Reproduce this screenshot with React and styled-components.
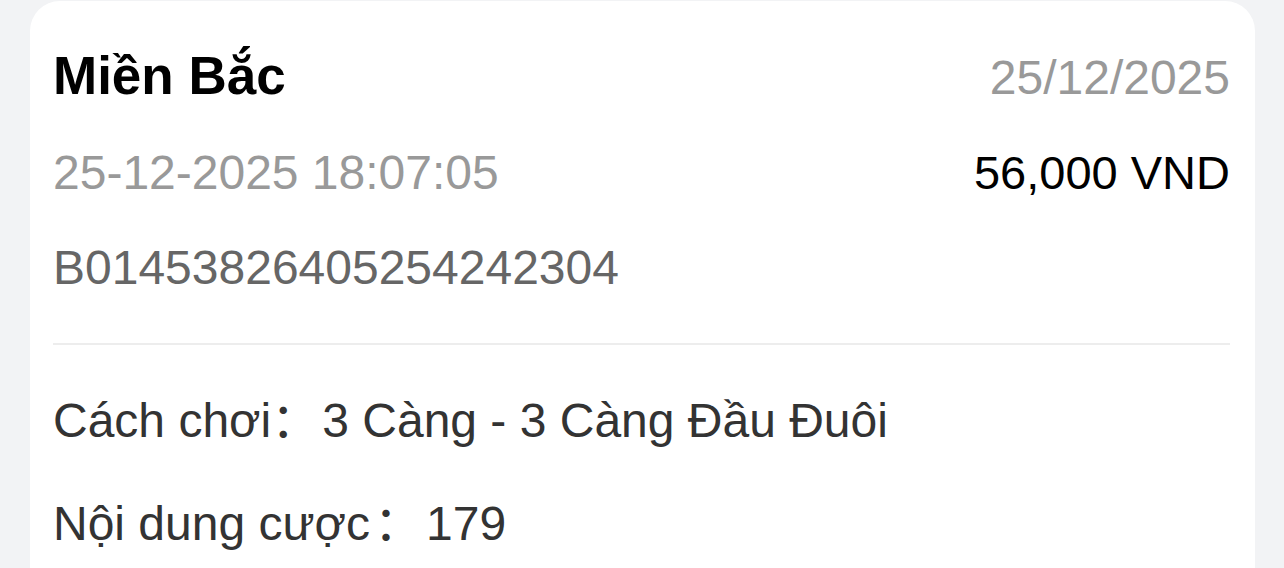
import React from "react";
import styled, { createGlobalStyle } from "styled-components";

const Global = createGlobalStyle`
  html, body { margin: 0; padding: 0; background: #f2f3f5; }
  body { font-family: "Liberation Sans", Arial, "Noto Sans CJK SC", sans-serif; }
`;

const Page = styled.div`
  padding: 1px 29px 0 30px;
  height: 568px;
  box-sizing: border-box;
  overflow: hidden;
`;

const Card = styled.div`
  background: #ffffff;
  border-radius: 30px;
  padding: 51px 25px 60px 23px;
  min-height: 700px;
  box-sizing: border-box;
`;

const Row = styled.div`
  display: flex;
  justify-content: space-between;
  align-items: baseline;
  margin-top: ${(p) => p.$gap || 0}px;
`;

const Title = styled.div`
  font-size: 53px;
  line-height: 48px;
  font-weight: 700;
  color: #000;
`;

const Text = styled.div`
  font-size: ${(p) => p.$size || 48}px;
  line-height: 48px;
  color: ${(p) => p.$color || "#333"};
`;

const Divider = styled.div`
  height: 2px;
  background: #ededed;
  margin-top: 51px;
`;

const Field = styled.div`
  font-size: 48px;
  line-height: 48px;
  color: #333;
  white-space: nowrap;
  margin-top: ${(p) => p.$gap}px;
`;

const Colon = styled.span`
  font-family: "Noto Sans CJK SC", sans-serif;
  line-height: 0;
  margin-left: ${(p) => p.$pre || 0}px;
  margin-right: ${(p) => p.$post || 4}px;
`;

export default function App() {
  return (
    <>
      <Global />
      <Page>
        <Card>
          <Row>
            <Title>Miền Bắc</Title>
            <Text $color="#999">25/12/2025</Text>
          </Row>
          <Row $gap={47}>
            <Text $color="#999">25-12-2025 18:07:05</Text>
            <Text $color="#000" $size={47}>56,000 VND</Text>
          </Row>
          <Row $gap={47}>
            <Text $color="#666">B01453826405254242304</Text>
          </Row>
          <Divider />
          <Field $gap={52}>
            Cách chơi<Colon $post={3}>：</Colon>3 Càng - 3 Càng Đầu Đuôi
          </Field>
          <Field $gap={55}>
            Nội dung cược<Colon $pre={4} $post={4}>：</Colon>179
          </Field>
        </Card>
      </Page>
    </>
  );
}
